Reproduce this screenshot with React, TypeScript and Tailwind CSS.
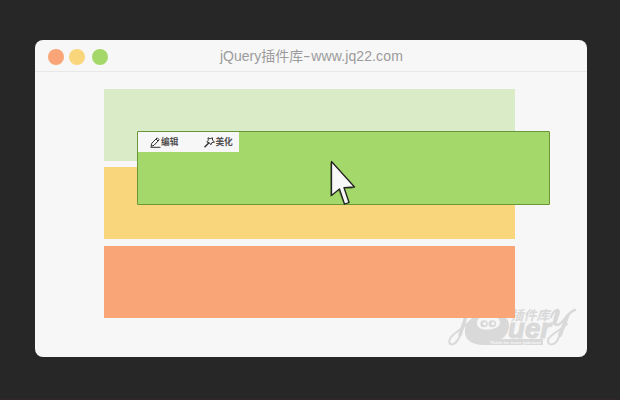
import React from 'react';

const eyes = [484, 492.3];

function WindowHeader() {
  return (
    <header className="flex h-8 shrink-0 items-center border-b border-[#e8e8e8] pt-[3px] pl-[13px]">
      <span className="size-4 rounded-full bg-[#f9a578]" />
      <span className="ml-[5px] size-4 rounded-full bg-[#f9d67b]" />
      <span className="ml-[7px] size-4 rounded-full bg-[#a5d86a]" />
      <h1 className="mb-[3px] ml-[112px] whitespace-nowrap text-[14px] leading-4 text-[#9b9b9b]">
        jQuery插件库<span className="inline-block w-[8px] origin-left scale-x-[1.6]">-</span><span className="tracking-[0.12px]">www.jq22.com</span>
      </h1>
    </header>
  );
}

function PencilIcon() {
  return (
    <svg width="11" height="11" viewBox="0 0 11 11" fill="none" stroke="#333" strokeWidth="1">
      <path d="M1 9.3 1.8 6.2 7.2.8 9.2 2.8 4 8.3Z M6 2 8 4 M.5 10.3H10.5" />
    </svg>
  );
}

function WandIcon() {
  return (
    <svg width="11" height="11" viewBox="0 0 11 11" fill="none" stroke="#333" strokeWidth="1">
      <path d="M.5 10.3 5 5.8" strokeWidth="1.5" />
      <path d="m4 .8 2.1.9L8.5.8 8.5 3.3 10.5 5 7.8 5.7 6.8 7.8 5.3 5.6 2.8 5 4.3 3.3Z" />
    </svg>
  );
}

function Logo() {
  return (
    <svg className="absolute left-[409px] top-[262px]" width="136" height="50" viewBox="444 302 136 50">
      <g fill="none" stroke="#d9d9d9" strokeLinecap="round">
        <path d="M465 319C461 330 460 343 452 344.5C447.5 344 449 338 453 335C457 331 462 329 468 323" strokeWidth="2" />
        <path d="M465.5 318 460 335" strokeWidth="3.5" />
        <path d="M551 317C554 309 561 307 558 315C555 322 554 326 558 325C564 322 569 311 575 310" strokeWidth="2.3" />
        <path d="M557.5 312 554.5 323" strokeWidth="4.2" />
        <path d="M571 312C564 319 562 331 558 339C555 346 547 346 548 340C550 334 560 331 567 324" strokeWidth="2" />
        <path d="M567 317 560 335" strokeWidth="3.8" />
      </g>
      <path fill="#d9d9d9" fillRule="evenodd" d="M489 312C503 312 510 319 509 327C508 333 505 337 501 339H543V345H484C470 345 464 338 465 330C466 321 476 312 489 312ZM490 315C481 315 476.5 319 477 324C478 328 482 330 488.5 329.5C495 329 500 327 500 322C499 318 496 315 490 315Z" />
      {eyes.map((x) => (
        <g key={x}>
          <ellipse cx={x} cy="323.7" rx="3.8" ry="3.5" fill="#d9d9d9" />
          <circle cx={x + 0.7} cy="323.7" r="1.6" fill="#f7f7f7" />
        </g>
      ))}
      <text x="508" y="338.2" textLength="43" lengthAdjust="spacingAndGlyphs" fill="#d9d9d9" stroke="#d9d9d9" strokeWidth="1" fontSize="28" fontWeight="700" fontStyle="italic">uer</text>
      <text x="510.5" y="320" textLength="39" fill="#d9d9d9" fontSize="13" fontWeight="700" fontStyle="italic">插件库</text>
      <text x="490" y="343.6" textLength="51" lengthAdjust="spacingAndGlyphs" fill="#f7f7f7" fontSize="4.3" fontWeight="700">Think for more jq&amp;more</text>
    </svg>
  );
}

function DraggedPanel() {
  return (
    <div className="absolute left-[102px] top-[91px] h-[74px] w-[413px] rounded-[1px] border border-[#6b9637] bg-[#a5d86a]">
      <div className="flex h-5 w-[101px] items-center bg-[#f7f7f7] text-[8.7px] font-bold leading-none text-[#505050]">
        <span className="ml-3 flex items-center whitespace-nowrap"><PencilIcon />编辑</span>
        <span className="ml-[26px] flex items-center whitespace-nowrap"><WandIcon />美化</span>
      </div>
      <svg className="absolute left-[191px] top-[27px]" width="29" height="48" viewBox="0 0 29 48">
        <path d="M1 3V38L9 31 15 46 21 44 16 30H24Z" fill="#517b28" opacity=".65" />
        <path d="M2.5 2.5V36.5L10.5 30 15.5 45 20 43.5 15 28.7 25.5 28Z" fill="#f8f8f8" stroke="#242424" strokeWidth="1.3" strokeLinejoin="round" />
      </svg>
    </div>
  );
}

export default function App() {
  return (
    <div className="h-[400px] w-[620px] overflow-hidden border-b border-[#32262b] bg-[#272727] pt-10 pl-[35px] font-['Liberation_Sans','Noto_Sans_CJK_SC',sans-serif]">
      <main className="relative flex h-[317px] w-[552px] flex-col rounded-lg bg-[#f7f7f7]">
        <WindowHeader />
        <Logo />
        <section className="relative ml-[69px] mt-[17px] w-[411px]">
          <div className="h-[72px] bg-[#d9ebc7]" />
          <div className="mt-1.5 h-[72px] bg-[#f9d67b]" />
          <div className="mt-[7px] h-[72px] bg-[#f9a578]" />
        </section>
        <DraggedPanel />
      </main>
    </div>
  );
}
